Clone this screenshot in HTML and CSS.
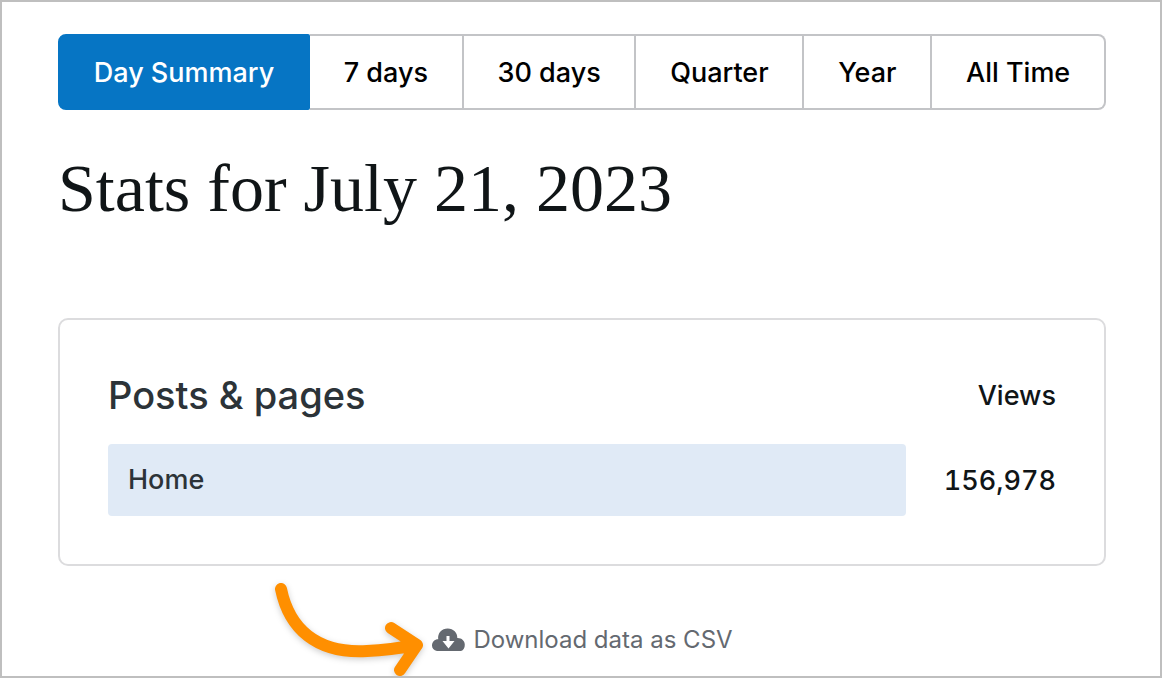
FILE: index.html
```html
<!DOCTYPE html>
<html lang="en">
<head>
    <meta charset="UTF-8">
    <meta name="viewport" content="width=device-width, initial-scale=1.0">
    <title>Stats for July 21, 2023</title>
    <link rel="stylesheet" href="styles.css">
</head>
<body>
    <main>
        <nav class="periods" aria-label="Period">
            <button type="button" class="period active" aria-pressed="true">Day Summary</button>
            <button type="button" class="period">7 days</button>
            <button type="button" class="period">30 days</button>
            <button type="button" class="period">Quarter</button>
            <button type="button" class="period">Year</button>
            <button type="button" class="period">All Time</button>
        </nav>

        <h1>Stats for July 21, 2023</h1>

        <section class="card">
            <table class="stats">
                <thead>
                    <tr>
                        <th scope="col" class="title">Posts &amp; pages</th>
                        <th scope="col" class="views">Views</th>
                    </tr>
                </thead>
                <tbody>
                    <tr>
                        <td><div class="bar">Home</div></td>
                        <td class="views">156,978</td>
                    </tr>
                </tbody>
            </table>
        </section>

        <div class="download">
            <a href="#" class="download-link">
                <svg class="cloud" viewBox="0 0 34 24" aria-hidden="true">
                    <path fill="#646970" d="M6 23C2.800 22.500 1 20.300 1 17.500C1 14 3.700 11.300 7.200 11.300C6.500 5 10.800 .5 16.700 .5C22.500 .5 26.500 4.800 26.300 10C30.500 9.800 33.800 12.700 33.800 16.700C33.800 19.800 32.500 22.300 30 23Z"/>
                    <path fill="#fff" d="M15.500 8h3v5h5L17.500 20.500L11.500 13h4z"/>
                </svg>
                <span>Download data as CSV</span>
            </a>
            <svg class="arrow" viewBox="0 0 160 104" aria-hidden="true">
                <path d="M11 18C19 57 46 83 97 80Q120 79 147 74M121 57L147 74L130 99"/>
            </svg>
        </div>
    </main>
</body>
</html>
```

FILE: styles.css
```css
* {
    box-sizing: border-box;
}

body {
    margin: 0;
    min-height: 100vh;
    padding: 32px 54px 0 56px;
    border: 2px solid #bfbfbf;
    background-color: #fff;
    color: #101517;
    font-family: Inter, "Liberation Sans", sans-serif;
    font-size: 27px;
}

/* Period switcher */
.periods {
    display: flex;
}

.period {
    flex: 1 1 auto;
    height: 76px;
    margin: 0;
    padding: 0 30px;
    border: 2px solid #c3c4c7;
    border-left: none;
    background-color: #fff;
    color: #000;
    font-family: inherit;
    font-size: 27px;
    font-weight: 500;
    white-space: nowrap;
    cursor: pointer;
}

.period:first-child {
    border-left: 2px solid #c3c4c7;
    border-radius: 8px 2px 2px 8px;
}

.period:last-child {
    border-radius: 0 8px 8px 0;
}

.period.active {
    border-color: #0675c4;
    background-color: #0675c4;
    color: #fff;
}

h1 {
    margin: 38px 0 90px;
    font-family: "Liberation Serif", serif;
    font-size: 68px;
    font-weight: normal;
    line-height: 80px;
}

.card {
    padding: 48px;
    border: 2px solid #dcdcde;
    border-radius: 10px;
}

.stats {
    width: 100%;
    border-collapse: collapse;
    table-layout: fixed;
}

.stats th,
.stats td {
    padding: 0;
    text-align: left;
    font-weight: 500;
}

.stats th {
    height: 76px;
    padding-bottom: 22px;
}

.stats .title {
    color: #2c3338;
    font-size: 38px;
}

.stats .views {
    width: 150px;
    text-align: right;
    font-variant-numeric: tabular-nums;
}

.bar {
    padding: 0 20px;
    border-radius: 4px;
    background-color: #e0eaf6;
    color: #2c3338;
    line-height: 72px;
}

.download {
    position: relative;
    display: flex;
    justify-content: center;
    padding-top: 58px;
}

.download-link {
    display: flex;
    align-items: center;
    gap: 8px;
    color: #646970;
    font-size: 24px;
    line-height: 32px;
    text-decoration: none;
}

.cloud {
    width: 34px;
    height: 24px;
}

/* Pointer drawn over the download row */
.arrow {
    position: absolute;
    top: 5px;
    right: calc(50% + 152px);
    width: 160px;
    height: 104px;
    overflow: visible;
    fill: none;
    stroke: #ff8f00;
    stroke-width: 12;
    stroke-linecap: round;
    stroke-linejoin: round;
    filter: drop-shadow(0 2px 3px rgba(0, 0, 0, 0.2));
}
```
